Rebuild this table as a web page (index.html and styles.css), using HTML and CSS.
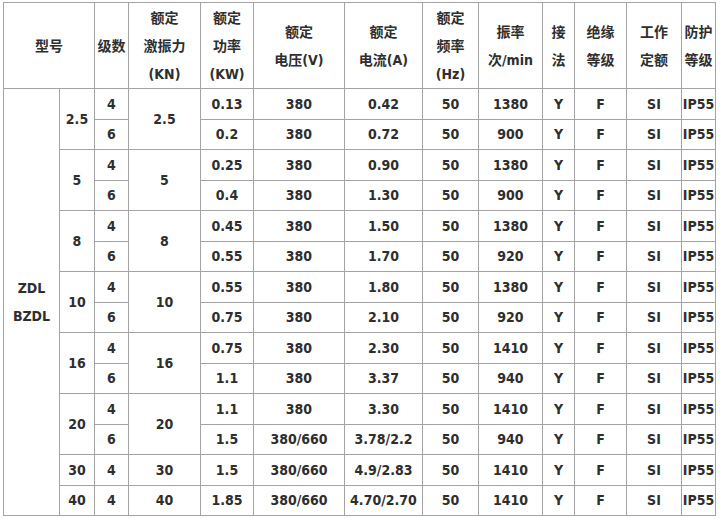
FILE: index.html
```html
<!DOCTYPE html>
<html>
<head>
<meta charset="utf-8">
<link rel="stylesheet" href="styles.css">
</head>
<body>
<table class="spec">
<colgroup>
<col class="c1"><col class="c2"><col class="c3"><col class="c4"><col class="c5"><col class="c6"><col class="c7"><col class="c8"><col class="c9"><col class="c10"><col class="c11"><col class="c12"><col class="c13">
</colgroup>
<thead>
<tr class="head">
<th colspan="2">型号</th>
<th>级数</th>
<th>额定<br>激振力<br>(KN)</th>
<th>额定<br>功率<br>(KW)</th>
<th>额定<br>电压(V)</th>
<th>额定<br>电流(A)</th>
<th>额定<br>频率<br>(Hz)</th>
<th>振率<br>次/min</th>
<th>接<br>法</th>
<th>绝缘<br>等级</th>
<th>工作<br>定额</th>
<th>防护<br>等级</th>
</tr>
</thead>
<tbody>
<tr><td rowspan="14" class="model">ZDL<br>BZDL</td><td rowspan="2">2.5</td><td>4</td><td rowspan="2">2.5</td><td>0.13</td><td>380</td><td>0.42</td><td>50</td><td>1380</td><td>Y</td><td>F</td><td>SI</td><td>IP55</td></tr>
<tr><td>6</td><td>0.2</td><td>380</td><td>0.72</td><td>50</td><td>900</td><td>Y</td><td>F</td><td>SI</td><td>IP55</td></tr>
<tr><td rowspan="2">5</td><td>4</td><td rowspan="2">5</td><td>0.25</td><td>380</td><td>0.90</td><td>50</td><td>1380</td><td>Y</td><td>F</td><td>SI</td><td>IP55</td></tr>
<tr><td>6</td><td>0.4</td><td>380</td><td>1.30</td><td>50</td><td>900</td><td>Y</td><td>F</td><td>SI</td><td>IP55</td></tr>
<tr><td rowspan="2">8</td><td>4</td><td rowspan="2">8</td><td>0.45</td><td>380</td><td>1.50</td><td>50</td><td>1380</td><td>Y</td><td>F</td><td>SI</td><td>IP55</td></tr>
<tr><td>6</td><td>0.55</td><td>380</td><td>1.70</td><td>50</td><td>920</td><td>Y</td><td>F</td><td>SI</td><td>IP55</td></tr>
<tr><td rowspan="2">10</td><td>4</td><td rowspan="2">10</td><td>0.55</td><td>380</td><td>1.80</td><td>50</td><td>1380</td><td>Y</td><td>F</td><td>SI</td><td>IP55</td></tr>
<tr><td>6</td><td>0.75</td><td>380</td><td>2.10</td><td>50</td><td>920</td><td>Y</td><td>F</td><td>SI</td><td>IP55</td></tr>
<tr><td rowspan="2">16</td><td>4</td><td rowspan="2">16</td><td>0.75</td><td>380</td><td>2.30</td><td>50</td><td>1410</td><td>Y</td><td>F</td><td>SI</td><td>IP55</td></tr>
<tr><td>6</td><td>1.1</td><td>380</td><td>3.37</td><td>50</td><td>940</td><td>Y</td><td>F</td><td>SI</td><td>IP55</td></tr>
<tr><td rowspan="2">20</td><td>4</td><td rowspan="2">20</td><td>1.1</td><td>380</td><td>3.30</td><td>50</td><td>1410</td><td>Y</td><td>F</td><td>SI</td><td>IP55</td></tr>
<tr><td>6</td><td>1.5</td><td>380/660</td><td>3.78/2.2</td><td>50</td><td>940</td><td>Y</td><td>F</td><td>SI</td><td>IP55</td></tr>
<tr><td>30</td><td>4</td><td>30</td><td>1.5</td><td>380/660</td><td>4.9/2.83</td><td>50</td><td>1410</td><td>Y</td><td>F</td><td>SI</td><td>IP55</td></tr>
<tr><td>40</td><td>4</td><td>40</td><td>1.85</td><td>380/660</td><td>4.70/2.70</td><td>50</td><td>1410</td><td>Y</td><td>F</td><td>SI</td><td>IP55</td></tr>
</tbody>
</table>
</body>
</html>
```
FILE: styles.css
```css
html, body {
  margin: 0;
  padding: 0;
  background: #ffffff;
}
body {
  padding: 2px 0 0 3px;
}
.spec {
  border-collapse: collapse;
  table-layout: fixed;
  width: 713px;
  font-family: "DejaVu Sans Condensed", "DejaVu Sans", "Noto Sans CJK SC", sans-serif;
  font-stretch: condensed;
  font-weight: bold;
  font-size: 14px;
  color: #2e2e2e;
}
.spec th, .spec td {
  border: 1px solid #a3a3a3;
  padding: 0;
  text-align: center;
  vertical-align: middle;
  white-space: nowrap;
  font-weight: bold;
}
.spec th {
  line-height: 28px;
}
.head {
  height: 86px;
}
.spec tbody tr {
  height: 30.5px;
}
.model {
  line-height: 28px;
}
.c1 { width: 56px; }
.c2 { width: 35px; }
.c3 { width: 34px; }
.c4 { width: 72px; }
.c5 { width: 53px; }
.c6 { width: 91px; }
.c7 { width: 78px; }
.c8 { width: 56px; }
.c9 { width: 64px; }
.c10 { width: 32px; }
.c11 { width: 52px; }
.c12 { width: 55px; }
.c13 { width: 34px; }
```
